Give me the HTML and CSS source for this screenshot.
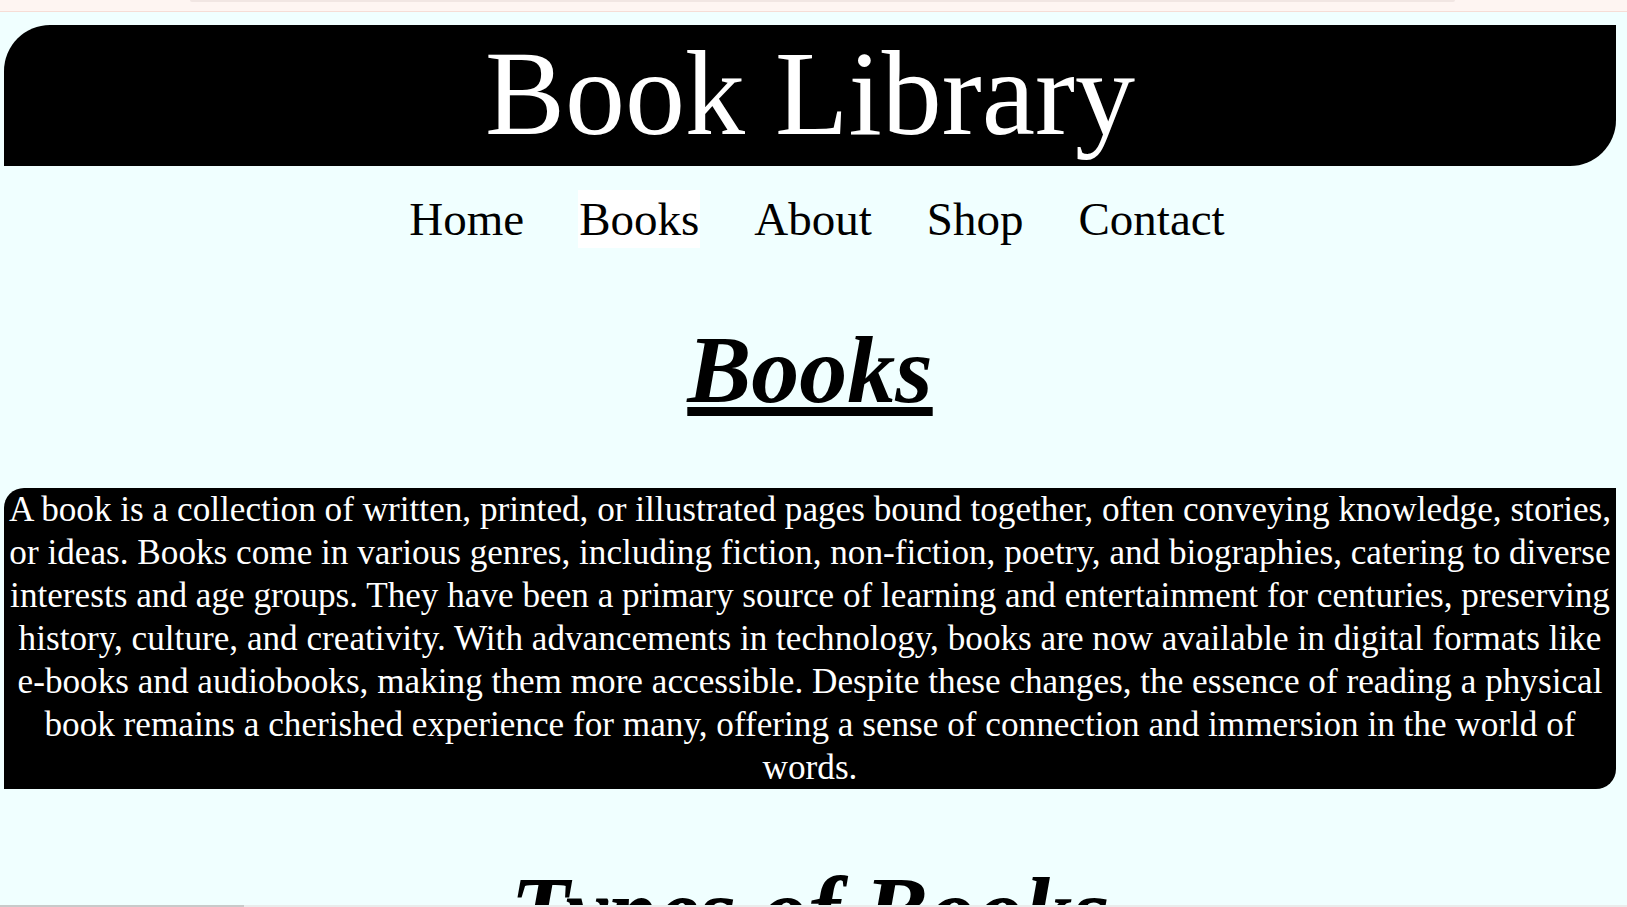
FILE: index.html
```html
<!DOCTYPE html>
<html lang="en">
<head>
<meta charset="utf-8">
<title>Book Library</title>
<link rel="stylesheet" href="styles.css">
</head>
<body>
<div class="topbar"><div class="topbar-tab"></div></div>
<header class="site-header">
  <h1 class="site-title">Book Library</h1>
</header>
<nav class="main-nav">
  <a class="nav-link" href="#">Home</a>
  <a class="nav-link active" href="#">Books</a>
  <a class="nav-link" href="#">About</a>
  <a class="nav-link" href="#">Shop</a>
  <a class="nav-link" href="#">Contact</a>
</nav>
<main class="content">
  <h2 class="section-title">Books</h2>
  <p class="intro">A book is a collection of written, printed, or illustrated pages bound together, often conveying knowledge, stories, or ideas. Books come in various genres, including fiction, non-fiction, poetry, and biographies, catering to diverse interests and age groups. They have been a primary source of learning and entertainment for centuries, preserving history, culture, and creativity. With advancements in technology, books are now available in digital formats like e-books and audiobooks, making them more accessible. Despite these changes, the essence of reading a physical book remains a cherished experience for many, offering a sense of connection and immersion in the world of words.</p>
  <h2 class="section-title">Types of Books</h2>
</main>
<div class="hscroll"><div class="hscroll-thumb"></div></div>
</body>
</html>
```

FILE: styles.css
```css
html, body {
  overflow: hidden;
}
body {
  margin: 0;
  background: #f0ffff;
  font-family: "Liberation Serif", "Times New Roman", serif;
  color: #000;
}
.topbar {
  height: 11px;
  background: #fef5f2;
  border-bottom: 1px solid #f6ddd6;
}
.topbar-tab {
  margin-left: 190px;
  width: 1265px;
  height: 2px;
  background: #f1e6e3;
  border-radius: 0 0 10px 10px;
}
.site-header {
  margin: 13px 11px 0 4px;
  background: #000;
  color: #fff;
  border-radius: 46px 0 46px 0;
  text-align: center;
  padding-bottom: 3px;
}
.site-title {
  margin: 0;
  font-size: 120px;
  font-weight: normal;
}
.main-nav {
  display: flex;
  justify-content: center;
  gap: 53px;
  margin: 24px 11px 0 4px;
  padding-left: 14px;
}
.nav-link {
  font-size: 47px;
  color: #000;
  text-decoration: none;
  padding: 2px 1px;
}
.nav-link.active {
  background: #fff;
}
.content {
  margin: 0 11px 0 4px;
}
.section-title {
  margin: 66px 0 64px;
  text-align: center;
  font-size: 96px;
  font-weight: bold;
  font-style: italic;
  text-decoration: underline;
}
.intro {
  margin: -1px 0 0;
  background: #000;
  color: #fff;
  text-align: center;
  font-size: 35.2px;
  line-height: 43px;
  border-radius: 20px 0 20px 0;
}
.hscroll {
  position: fixed;
  left: 0;
  right: 0;
  bottom: 0;
  height: 2px;
  background: #e9ecec;
}
.hscroll-thumb {
  width: 244px;
  height: 100%;
  background: #c8caca;
}
```
